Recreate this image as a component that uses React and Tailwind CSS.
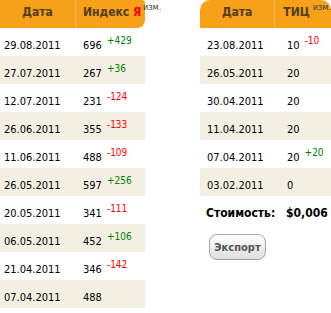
import React from 'react';

const font = "font-['DejaVu_Sans_Condensed','DejaVu_Sans',sans-serif]";

const indexRows = [
  { date: '29.08.2011', value: '696', diff: '+429' },
  { date: '27.07.2011', value: '267', diff: '+36' },
  { date: '12.07.2011', value: '231', diff: '-124' },
  { date: '26.06.2011', value: '355', diff: '-133' },
  { date: '11.06.2011', value: '488', diff: '-109' },
  { date: '26.05.2011', value: '597', diff: '+256' },
  { date: '20.05.2011', value: '341', diff: '-111' },
  { date: '06.05.2011', value: '452', diff: '+106' },
  { date: '21.04.2011', value: '346', diff: '-142' },
  { date: '07.04.2011', value: '488', diff: '' },
];

const ticRows = [
  { date: '23.08.2011', value: '10', diff: '-10' },
  { date: '26.05.2011', value: '20', diff: '' },
  { date: '30.04.2011', value: '20', diff: '' },
  { date: '11.04.2011', value: '20', diff: '' },
  { date: '07.04.2011', value: '20', diff: '+20' },
  { date: '03.02.2011', value: '0', diff: '' },
];

const Diff = ({ diff }) => {
  if (!diff) return null;
  const color = diff.startsWith('+') ? 'text-[#008000]' : 'text-[#ff0000]';
  return (
    <span className={`relative bottom-[5px] ml-[5px] text-[10px] ${color}`}>{diff}</span>
  );
};

const Row = ({ row, i, firstW, firstPad, secondPad }) => (
  <div className={`flex h-[28px] ${i % 2 ? 'bg-[#f3f0e3]' : 'bg-white'}`}>
    <div className={`${firstW} ${firstPad} pt-[11px] leading-[14px]`}>{row.date}</div>
    <div className={`flex-1 ${secondPad} pt-[11px] leading-[14px] whitespace-nowrap`}>
      {row.value}
      <Diff diff={row.diff} />
    </div>
  </div>
);

export default function App() {
  return (
    <div className={`w-[331px] h-[313px] bg-white overflow-hidden flex items-start text-[11px] text-black ${font}`}>
      {/* Index table */}
      <div className="w-[145px] shrink-0">
        <div className="relative flex h-[28px] bg-[#f6a117] rounded-tr-[3px] rounded-br-[8px] font-bold text-[12px] text-[#503d1c]">
          <div className="w-[76px] text-center pt-[5px] leading-[14px] border-r border-[#f9bf5c]">Дата</div>
          <div className="flex-1 pl-[7px] pt-[5px] leading-[14px] whitespace-nowrap">
            Индекс <span className="text-[#ff0000]">Я</span>
          </div>
          <span className="absolute left-[143px] top-[1px] text-[9px] font-normal text-[#444]">изм.</span>
        </div>
        {indexRows.map((row, i) => (
          <Row key={row.date} row={row} i={i} firstW="w-[76px]" firstPad="pl-[4px]" secondPad="pl-[7px]" />
        ))}
      </div>

      {/* TIC table */}
      <div className="w-[131px] shrink-0 ml-[55px]">
        <div className="flex h-[28px] bg-[#f6a117] rounded-t-[10px] font-bold text-[12px] text-[#503d1c]">
          <div className="w-[79px] text-center pt-[5px] leading-[14px] border-r border-[#f9bf5c]">Дата</div>
          <div className="flex-1 pl-[8px] pt-[5px] leading-[14px] whitespace-nowrap">
            ТИЦ
            <span className="relative bottom-[6px] ml-[3px] text-[9px] font-normal text-[#444]">изм.</span>
          </div>
        </div>
        {ticRows.map((row, i) => (
          <Row key={row.date} row={row} i={i} firstW="w-[79px]" firstPad="pl-[7px]" secondPad="pl-[8px]" />
        ))}
        <div className="flex pt-[10px] leading-[14px] font-bold text-[12px]">
          <div className="w-[86px] pl-[6px]">Стоимость:</div>
          <div className="flex-1">$0,006</div>
        </div>
        <div className="pl-[9px] pt-[14px]">
          <button className="h-[26px] w-[57px] rounded-[8px] border border-[#a5a5a5] bg-gradient-to-b from-white to-[#dedede] text-[11px] font-bold text-[#555] leading-none">
            Экспорт
          </button>
        </div>
      </div>
    </div>
  );
}
